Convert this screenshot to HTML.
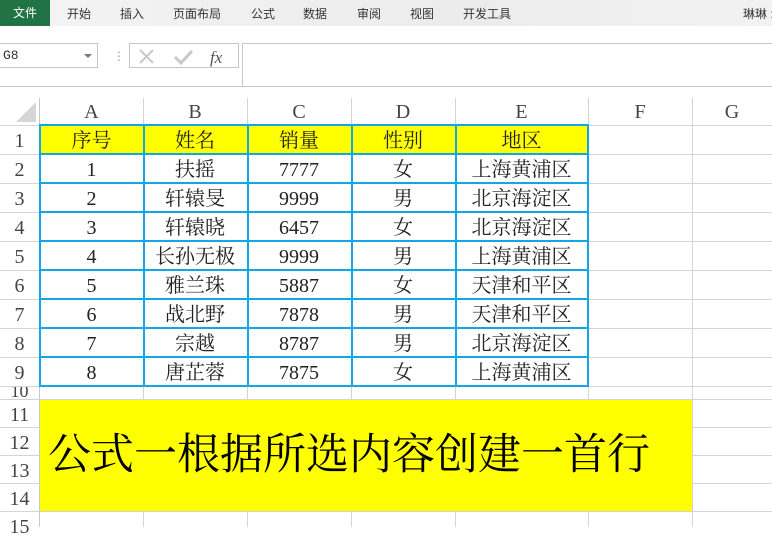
<!DOCTYPE html>
<html><head><meta charset="utf-8"><style>
*{margin:0;padding:0;box-sizing:border-box}
body{width:772px;height:527px;overflow:hidden;background:#fff;position:relative;font-family:"Liberation Sans","Noto Sans CJK SC",sans-serif}
.tb{position:absolute;left:0;top:0;width:772px;height:26px;background:linear-gradient(90deg,#f4f4f4,#ececec 60%,#f2f2f2)}
.tb span{position:absolute;top:5px;font-size:12px;color:#333;white-space:nowrap}
.file{position:absolute;left:0;top:0;width:50px;height:26px;background:#217346;color:#fff;font-size:12px;text-align:center;line-height:26px}
.nb{position:absolute;left:-2px;top:43px;width:100px;height:25px;border:1px solid #c6c6c6;font-size:13px;line-height:23px;padding-left:4px;color:#333;font-family:"Liberation Mono",monospace}
.fx{position:absolute;left:129px;top:43px;width:110px;height:25px;border:1px solid #c6c6c6}
.fbar{position:absolute;left:242px;top:43px;width:540px;height:44px;border:1px solid #c6c6c6}
.vl{position:absolute;width:1px;background:#d4d4d4}
.hl{position:absolute;height:1px;background:#d4d4d4}
.row{position:absolute;left:0;height:29px;display:flex;font-family:"Liberation Serif","Noto Serif CJK SC",serif;font-size:20px;color:#222;line-height:29px}
.row span{display:block;text-align:center;white-space:nowrap}
.row span:nth-child(1){width:39px;color:#444;margin-right:1px}
.row span:nth-child(2){width:103px}
.row span:nth-child(3),.row span:nth-child(4),.row span:nth-child(5){width:104px}
.row span:nth-child(6){width:133px}
.row span:nth-child(7){width:104px}
.row span:nth-child(8){width:80px}
.bh{position:absolute;height:2px;background:#12a6e6;left:39px;width:550px}
.bv{position:absolute;width:2px;background:#12a6e6;top:125px;height:262px}
.rh{position:absolute;left:0;width:39px;text-align:center;font-family:"Liberation Serif",serif;font-size:20px;color:#444;line-height:28px;overflow:hidden}
</style></head><body>
<div class="tb">
<div class="file">文件</div>
<span style="left:67px">开始</span><span style="left:120px">插入</span><span style="left:173px">页面布局</span><span style="left:251px">公式</span><span style="left:303px">数据</span><span style="left:357px">审阅</span><span style="left:410px">视图</span><span style="left:463px">开发工具</span><span style="left:743px">琳琳 :</span>
</div>
<div class="nb">G8</div>
<div style="position:absolute;left:84px;top:54px;width:0;height:0;border-left:4px solid transparent;border-right:4px solid transparent;border-top:4px solid #777"></div>
<div style="position:absolute;left:113px;top:49px;color:#999;font-size:12px">⋮</div>
<div class="fx">
<svg width="110" height="25" style="position:absolute;left:0;top:0"><path d="M10 6 L23 19 M23 6 L10 19" stroke="#c8c8c8" stroke-width="2"/><path d="M45 13 L51 19 L62 7" stroke="#c8c8c8" stroke-width="3" fill="none"/><text x="80" y="19" font-family="Liberation Serif" font-style="italic" font-size="17" fill="#555">fx</text></svg>
</div>
<div class="fbar"></div>
<div style="position:absolute;left:0;top:86px;width:772px;height:1px;background:#c6c6c6"></div>
<svg style="position:absolute;left:14px;top:100px" width="24" height="24"><path d="M22 2 L22 22 L2 22 Z" fill="#d6d6d6"/></svg>

<div style="position:absolute;left:40px;top:126px;width:548px;height:28px;background:#ffff00"></div>
<div style="position:absolute;left:40px;top:399px;width:652px;height:112px;background:#ffff00"></div>

<div class="vl" style="left:39px;top:98px;height:429px;background:#c8c8c8"></div>
<div class="vl" style="left:143px;top:98px;height:301px"></div>
<div class="vl" style="left:247px;top:98px;height:301px"></div>
<div class="vl" style="left:351px;top:98px;height:301px"></div>
<div class="vl" style="left:455px;top:98px;height:301px"></div>
<div class="vl" style="left:588px;top:98px;height:301px"></div>
<div class="vl" style="left:692px;top:98px;height:429px"></div>
<div class="vl" style="left:143px;top:511px;height:16px"></div>
<div class="vl" style="left:247px;top:511px;height:16px"></div>
<div class="vl" style="left:351px;top:511px;height:16px"></div>
<div class="vl" style="left:455px;top:511px;height:16px"></div>
<div class="vl" style="left:588px;top:511px;height:16px"></div>
<div class="hl" style="left:0;top:125px;width:772px"></div>
<div class="hl" style="left:0;top:154px;width:772px"></div>
<div class="hl" style="left:0;top:183px;width:772px"></div>
<div class="hl" style="left:0;top:212px;width:772px"></div>
<div class="hl" style="left:0;top:241px;width:772px"></div>
<div class="hl" style="left:0;top:270px;width:772px"></div>
<div class="hl" style="left:0;top:299px;width:772px"></div>
<div class="hl" style="left:0;top:328px;width:772px"></div>
<div class="hl" style="left:0;top:357px;width:772px"></div>
<div class="hl" style="left:0;top:386px;width:772px"></div>
<div class="hl" style="left:0;top:399px;width:772px"></div>
<div class="hl" style="left:0;top:427px;width:40px"></div><div class="hl" style="left:692px;top:427px;width:80px"></div>
<div class="hl" style="left:0;top:455px;width:40px"></div><div class="hl" style="left:692px;top:455px;width:80px"></div>
<div class="hl" style="left:0;top:483px;width:40px"></div><div class="hl" style="left:692px;top:483px;width:80px"></div>
<div class="hl" style="left:0;top:511px;width:772px"></div>

<div class="bh" style="top:124px"></div><div class="bh" style="top:153px"></div><div class="bh" style="top:182px"></div><div class="bh" style="top:211px"></div><div class="bh" style="top:240px"></div><div class="bh" style="top:269px"></div><div class="bh" style="top:298px"></div><div class="bh" style="top:327px"></div><div class="bh" style="top:356px"></div><div class="bh" style="top:385px"></div>
<div class="bv" style="left:39px"></div><div class="bv" style="left:143px"></div><div class="bv" style="left:247px"></div><div class="bv" style="left:351px"></div><div class="bv" style="left:455px"></div><div class="bv" style="left:587px"></div>

<div class="row" style="top:98px;color:#444"><span></span><span>A</span><span>B</span><span>C</span><span>D</span><span>E</span><span>F</span><span>G</span></div>
<div class="row" style="top:127px"><span>1</span><span>序号</span><span>姓名</span><span>销量</span><span>性别</span><span>地区</span></div>
<div class="row" style="top:156px"><span>2</span><span>1</span><span>扶摇</span><span>7777</span><span>女</span><span>上海黄浦区</span></div>
<div class="row" style="top:185px"><span>3</span><span>2</span><span>轩辕旻</span><span>9999</span><span>男</span><span>北京海淀区</span></div>
<div class="row" style="top:214px"><span>4</span><span>3</span><span>轩辕晓</span><span>6457</span><span>女</span><span>北京海淀区</span></div>
<div class="row" style="top:243px"><span>5</span><span>4</span><span>长孙无极</span><span>9999</span><span>男</span><span>上海黄浦区</span></div>
<div class="row" style="top:272px"><span>6</span><span>5</span><span>雅兰珠</span><span>5887</span><span>女</span><span>天津和平区</span></div>
<div class="row" style="top:301px"><span>7</span><span>6</span><span>战北野</span><span>7878</span><span>男</span><span>天津和平区</span></div>
<div class="row" style="top:330px"><span>8</span><span>7</span><span>宗越</span><span>8787</span><span>男</span><span>北京海淀区</span></div>
<div class="row" style="top:359px"><span>9</span><span>8</span><span>唐芷蓉</span><span>7875</span><span>女</span><span>上海黄浦区</span></div>
<div class="rh" style="top:387px;height:12px;line-height:8px;font-size:18px">10</div>
<div class="rh" style="top:401px">11</div>
<div class="rh" style="top:429px">12</div>
<div class="rh" style="top:457px">13</div>
<div class="rh" style="top:485px">14</div>
<div class="rh" style="top:513px">15</div>
<div style="position:absolute;left:48px;top:429px;font-family:'Liberation Serif','Noto Serif CJK SC',serif;font-size:43px;line-height:54px;color:#000;white-space:nowrap">公式一根据所选内容创建一首行</div>
</body></html>
